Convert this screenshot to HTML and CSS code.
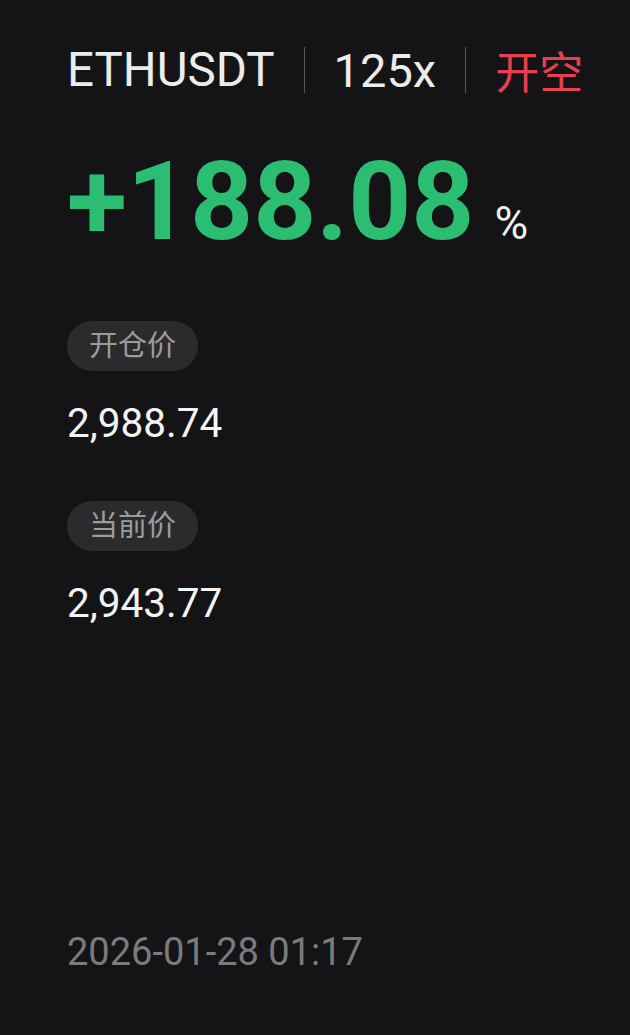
FILE: index.html
```html
<!DOCTYPE html>
<html>
  <head>
    <meta charset="UTF-8">
    <title>ETHUSDT 收益</title>
    <link rel="stylesheet" href="styles.css">
  </head>

  <body>
    <div class="card">
      <!-- en-tête : paire, levier, sens -->
      <div class="head">
        <span class="pair">ETHUSDT</span>
        <span class="sep"></span>
        <span class="lev">125x</span>
        <span class="sep"></span>
        <span class="side">开空</span>
      </div>

      <div class="pnl">
        <span class="pnl-num">+188.08</span>
        <span class="pnl-unit">%</span>
      </div>

      <div class="field">
        <span class="tag">开仓价</span>
        <div class="price">2,988.74</div>
      </div>

      <div class="field">
        <span class="tag">当前价</span>
        <div class="price">2,943.77</div>
      </div>

      <div class="date">2026-01-28 01:17</div>
    </div>
  </body>
</html>
```

FILE: styles.css
```css
/* CSS styles */
body {
  margin: 0;
  background-color: #141416;
  font-family: Roboto, "Noto Sans CJK SC", sans-serif;
}

.card {
  height: 1035px;
  padding: 0 0 0 67px;
  box-sizing: border-box;
  display: flex;
  flex-direction: column;
}

.head {
  display: flex;
  align-items: center;
  height: 46px;
  margin-top: 47px;
  color: #ececec;
  font-size: 47.5px;
}

.sep {
  width: 1px;
  height: 46px;
  background: #555;
  margin: 0 29px;
}

.lev {
  font-size: 47px;
}

.side {
  color: #e8404e;
  font-size: 44px;
}

.pnl {
  display: flex;
  align-items: baseline;
  margin-top: 54px;
  height: 110px;
}

.pnl-num {
  color: #2bbd72;
  font-size: 110px;
  font-weight: bold;
  line-height: 110px;
}

.pnl-unit {
  color: #f0f0f0;
  font-size: 46px;
  margin-left: 20px;
}

.field {
  margin-top: 64px;
}

.field + .field {
  margin-top: 54px;
}

.tag {
  display: inline-block;
  height: 50px;
  line-height: 50px;
  padding: 0 22px;
  border-radius: 25px;
  background: #2b2b2d;
  color: #9c9c9c;
  font-size: 29px;
}

.price {
  margin-top: 28px;
  color: #f4f4f4;
  font-size: 40.5px;
  line-height: 48px;
}

.date {
  margin-top: auto;
  margin-bottom: 61px;
  color: #7b7b7d;
  font-size: 38px;
}
```
